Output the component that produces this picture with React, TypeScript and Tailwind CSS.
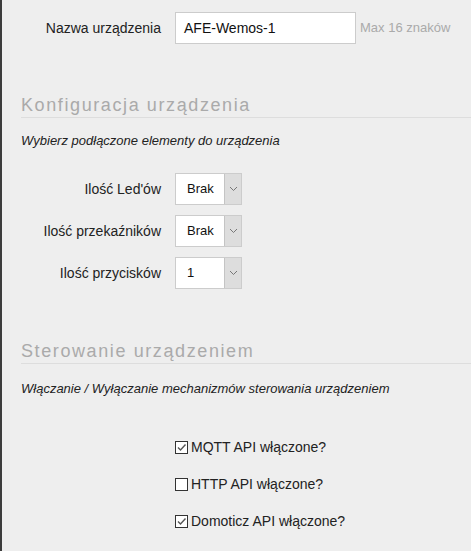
/* Device config form — AFE firmware panel */

const font = { fontFamily: '"Liberation Sans", Arial, sans-serif' };

function Chevron() {
  return (
    <svg width="9" height="6" viewBox="0 0 9 6" fill="none">
      <path d="M1 1l3.5 3.5L8 1" stroke="#777" strokeWidth="1" />
    </svg>
  );
}

function SelectRow({ label, value }: { label: string; value: string }) {
  return (
    <div className="flex items-center">
      <div className="w-[159px] pr-0 text-right text-[14px] text-[#222]">{label}</div>
      <div className="ml-[14px] flex h-[32px] w-[67px] border border-[#cccccc] bg-white">
        <div className="flex flex-1 items-center pl-[11px] text-[13px] text-[#111]">{value}</div>
        <div className="flex w-[17px] items-center justify-center border-l border-[#c4c4c4] bg-[#dddddd]">
          <Chevron />
        </div>
      </div>
    </div>
  );
}

function Check({ label, checked }: { label: string; checked: boolean }) {
  return (
    <div className="flex h-[20px] items-center pl-[173px]">
      <div className="flex h-[13px] w-[13px] items-center justify-center border border-[#333] bg-white">
        {checked && (
          <svg width="11" height="11" viewBox="0 0 11 11" fill="none">
            <path d="M2 5.5l2.5 2.5L9.5 2.5" stroke="#555" strokeWidth="1.4" />
          </svg>
        )}
      </div>
      <span className="ml-[3px] text-[14px] text-[#222]">{label}</span>
    </div>
  );
}

function SectionHeader({ title }: { title: string }) {
  return (
    <div className="ml-[19px] h-[25px] border-b border-[#dddddd] text-[18px] leading-[24px] tracking-[1.6px] text-[#aaaaaa]">
      {title}
    </div>
  );
}

export default function App() {
  return (
    <div
      className="h-[551px] w-[471px] overflow-hidden border-l-2 border-[#3c3c3c] bg-[#eeeeee]"
      style={font}
    >
      {/* Device name */}
      <div className="mt-[12px] flex items-center">
        <div className="w-[159px] text-right text-[14px] text-[#222]">Nazwa urządzenia</div>
        <div className="ml-[14px] flex h-[32px] w-[181px] items-center border border-[#cccccc] bg-white px-[8px] text-[14px] text-[#111]">
          AFE-Wemos-1
        </div>
        <span className="ml-[4px] text-[13px] text-[#aaaaaa]">Max 16 znaków</span>
      </div>

      {/* Device configuration */}
      <div className="mt-[49px]">
        <SectionHeader title="Konfiguracja urządzenia" />
        <p className="ml-[19px] mt-[15px] text-[13px] italic leading-[16px] text-[#222]">
          Wybierz podłączone elementy do urządzenia
        </p>
      </div>

      <div className="mt-[24px] flex flex-col gap-[10px]">
        <SelectRow label="Ilość Led'ów" value="Brak" />
        <SelectRow label="Ilość przekaźników" value="Brak" />
        <SelectRow label="Ilość przycisków" value="1" />
      </div>

      {/* Control */}
      <div className="mt-[50px]">
        <SectionHeader title="Sterowanie urządzeniem" />
        <p className="ml-[19px] mt-[17px] text-[13px] italic leading-[16px] text-[#222]">
          Włączanie / Wyłączanie mechanizmów sterowania urządzeniem
        </p>
      </div>

      <div className="mt-[40px] flex flex-col gap-[17px]">
        <Check label="MQTT API włączone?" checked />
        <Check label="HTTP API włączone?" checked={false} />
        <Check label="Domoticz API włączone?" checked />
      </div>
    </div>
  );
}
